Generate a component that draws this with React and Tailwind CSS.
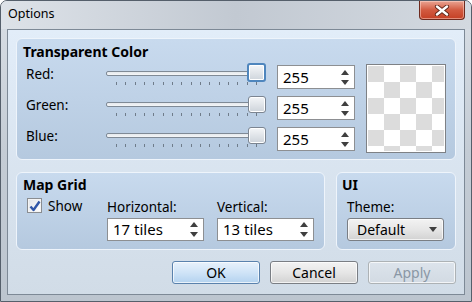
import React from 'react';

const ticks = Array.from({ length: 16 }, (_, i) => i);

function SpinArrows() {
  return (
    <div className="flex flex-col items-center gap-[5px]">
      <svg width="8" height="5" viewBox="0 0 8 5">
        <path d="M4 0 L8 5 L0 5 Z" fill="#3f3f3f" />
      </svg>
      <svg width="8" height="5" viewBox="0 0 8 5">
        <path d="M0 0 L8 0 L4 5 Z" fill="#3f3f3f" />
      </svg>
    </div>
  );
}

function SpinBox({ value, className }) {
  return (
    <div
      className={`flex items-center justify-between border border-[#8d8f92] bg-white pl-[5px] pr-[5px] text-[15px] text-black ${className}`}
    >
      <span className="leading-none">{value}</span>
      <SpinArrows />
    </div>
  );
}

function Slider({ focused }) {
  return (
    <div className="relative h-[24px] w-[160px]">
      <div className="absolute left-0 right-[10px] top-[6px] h-[5px] rounded-[2px] border border-[#7f8a96] bg-linear-to-b from-[#e4e8ec] to-[#f4f6f8]" />
      <div className="absolute left-[10px] top-[17px] flex w-[141px] justify-between">
        {ticks.map((t) => (
          <div key={t} className="h-[3px] w-px bg-[#6f7c8a]" />
        ))}
      </div>
      {focused ? (
        <div className="absolute left-[141px] top-[-2px] h-[19px] w-[19px] rounded-[3px] border-2 border-[#4f86bd] bg-linear-to-b from-[#f5f7f9] to-[#cfd5dc] shadow-[inset_0_0_0_1px_#ffffff]" />
      ) : (
        <div className="absolute left-[142px] top-0 h-[17px] w-[18px] rounded-[3px] border border-[#7c8591] bg-linear-to-b from-[#f4f6f8] to-[#cdd3da] shadow-[inset_0_0_0_1px_#ffffff]" />
      )}
    </div>
  );
}

function ColorRow({ label, focused }) {
  return (
    <div className="flex h-[24px] items-start">
      <div className="w-[80px] text-[13.5px] leading-[18px] text-black">{label}</div>
      <Slider focused={focused} />
      <SpinBox value="255" className="ml-[11px] h-[24px] w-[78px]" />
    </div>
  );
}

function Group({ className, children }) {
  return (
    <div
      className={`rounded-[6px] border border-[#eef4fb] bg-linear-to-b from-[#c8daee] to-[#b5c9df] ${className}`}
    >
      {children}
    </div>
  );
}

function Button({ children, primary, disabled }) {
  let cls =
    'border-[#7a7e84] from-[#f3f3f3] via-[#e6e6e6] to-[#d2d2d2] text-black';
  if (primary) cls = 'border-[#5a82ad] from-[#e8f2fc] via-[#d0e4f7] to-[#b3d2ef] text-black';
  if (disabled) cls = 'border-[#adb2b5] from-[#dde4ec] via-[#d7dfe7] to-[#d2dae3] text-[#8a97a5]';
  return (
    <div
      className={`flex h-[23px] w-[88px] items-center justify-center rounded-[3px] border bg-linear-to-b text-[14px] shadow-[inset_0_0_0_1px_rgba(255,255,255,0.7)] ${cls}`}
    >
      {children}
    </div>
  );
}

export default function App() {
  return (
    <div className="flex h-[302px] w-[472px] flex-col overflow-hidden rounded-t-[7px] border border-[#555f6b] bg-linear-to-b from-[#d9dfe6] via-[#c4ccd5] to-[#bcc5cf] font-['Noto_Sans',sans-serif]">
      {/* title bar */}
      <div className="flex h-[28px] shrink-0 items-start justify-between bg-linear-to-r from-[#dde2e8] via-[#c2c9d2] to-[#d3d9e0]">
        <div className="pl-[7px] pt-[5px] text-[12.5px] leading-[16px] text-black">Options</div>
        <div className="mr-[6px] flex h-[19px] w-[46px] items-center justify-center rounded-b-[4px] border border-t-0 border-[#6e2a1e] bg-linear-to-b from-[#e9a493] via-[#d25a40] to-[#c53f24] shadow-[inset_0_0_0_1px_rgba(255,220,210,0.5)]">
          <svg width="16" height="11" viewBox="0 0 16 11">
            <path d="M3 1.5 L13 9.5 M13 1.5 L3 9.5" stroke="#5c2418" strokeWidth="4.2" strokeLinecap="round" />
            <path d="M3 1.5 L13 9.5 M13 1.5 L3 9.5" stroke="#ffffff" strokeWidth="2.4" strokeLinecap="round" />
          </svg>
        </div>
      </div>

      {/* client area */}
      <div className="mx-[6px] flex h-[266px] w-[458px] shrink-0 flex-col border border-[#7d8996] bg-linear-to-b from-[#e2edf9] to-[#d1dce7] px-[8px] pt-[8px]">
        <Group className="h-[122px] px-[9px] pt-[4px]">
          <div className="ml-[-3px] text-[14px] font-bold leading-[18px] text-black">Transparent Color</div>
          <div className="mt-[3px] flex items-start">
            <div className="mt-[1px] flex flex-col gap-[7px]">
              <ColorRow label="Red:" focused />
              <ColorRow label="Green:" />
              <ColorRow label="Blue:" />
            </div>
            <div className="ml-[11px] h-[89px] w-[80px] border border-[#7e8185] bg-white p-[1px]">
              <div className="h-full w-full bg-[conic-gradient(white_25%,#dcdcdc_0_50%,white_0_75%,#dcdcdc_0)] bg-[length:32px_32px]" />
            </div>
          </div>
        </Group>

        <div className="mt-[12px] flex gap-[11px]">
          <Group className="h-[78px] w-[309px] pl-[6px] pt-[3px]">
            <div className="text-[14px] font-bold leading-[18px] text-black">Map Grid</div>
            <div className="mt-[4px] flex pl-[4px]">
              <div className="flex w-[80px] items-start gap-[6px]">
                <div className="flex h-[15px] w-[15px] items-center justify-center border border-[#8a8d91] bg-linear-to-br from-[#dfe3e8] to-[#ffffff] shadow-[inset_0_0_0_1px_#f4f4f4]">
                  <svg width="12" height="12" viewBox="0 0 12 12">
                    <path d="M1.5 6.5 L4.5 10 L10.5 1.5" fill="none" stroke="#2f56a8" strokeWidth="2.4" strokeLinejoin="round" />
                  </svg>
                </div>
                <span className="text-[13.5px] leading-[17px] text-black">Show</span>
              </div>
              <div className="flex w-[97px] flex-col">
                <span className="text-[13.5px] leading-[18px] text-black">Horizontal:</span>
                <SpinBox value="17 tiles" className="mt-[2px] h-[23px] w-[97px]" />
              </div>
              <div className="ml-[13px] flex w-[97px] flex-col">
                <span className="text-[13.5px] leading-[18px] text-black">Vertical:</span>
                <SpinBox value="13 tiles" className="mt-[2px] h-[23px] w-[97px]" />
              </div>
            </div>
          </Group>
          <Group className="h-[78px] flex-1 pl-[5px] pt-[3px]">
            <div className="text-[14px] font-bold leading-[18px] text-black">UI</div>
            <div className="mt-[4px] flex flex-col pl-[5px]">
              <span className="text-[13.5px] leading-[18px] text-black">Theme:</span>
              <div className="mt-[2px] flex h-[23px] w-[97px] items-center justify-between rounded-[3px] border border-[#7a7e84] bg-linear-to-b from-[#f3f3f3] via-[#e6e6e6] to-[#d2d2d2] pl-[9px] pr-[6px] text-[14px] text-black shadow-[inset_0_0_0_1px_rgba(255,255,255,0.7)]">
                <span>Default</span>
                <svg width="8" height="5" viewBox="0 0 8 5">
                  <path d="M0 0 L8 0 L4 5 Z" fill="#3f3f3f" />
                </svg>
              </div>
            </div>
          </Group>
        </div>

        <div className="mt-[11px] flex justify-end gap-[10px]">
          <Button primary>OK</Button>
          <Button>Cancel</Button>
          <Button disabled>Apply</Button>
        </div>
      </div>
    </div>
  );
}
